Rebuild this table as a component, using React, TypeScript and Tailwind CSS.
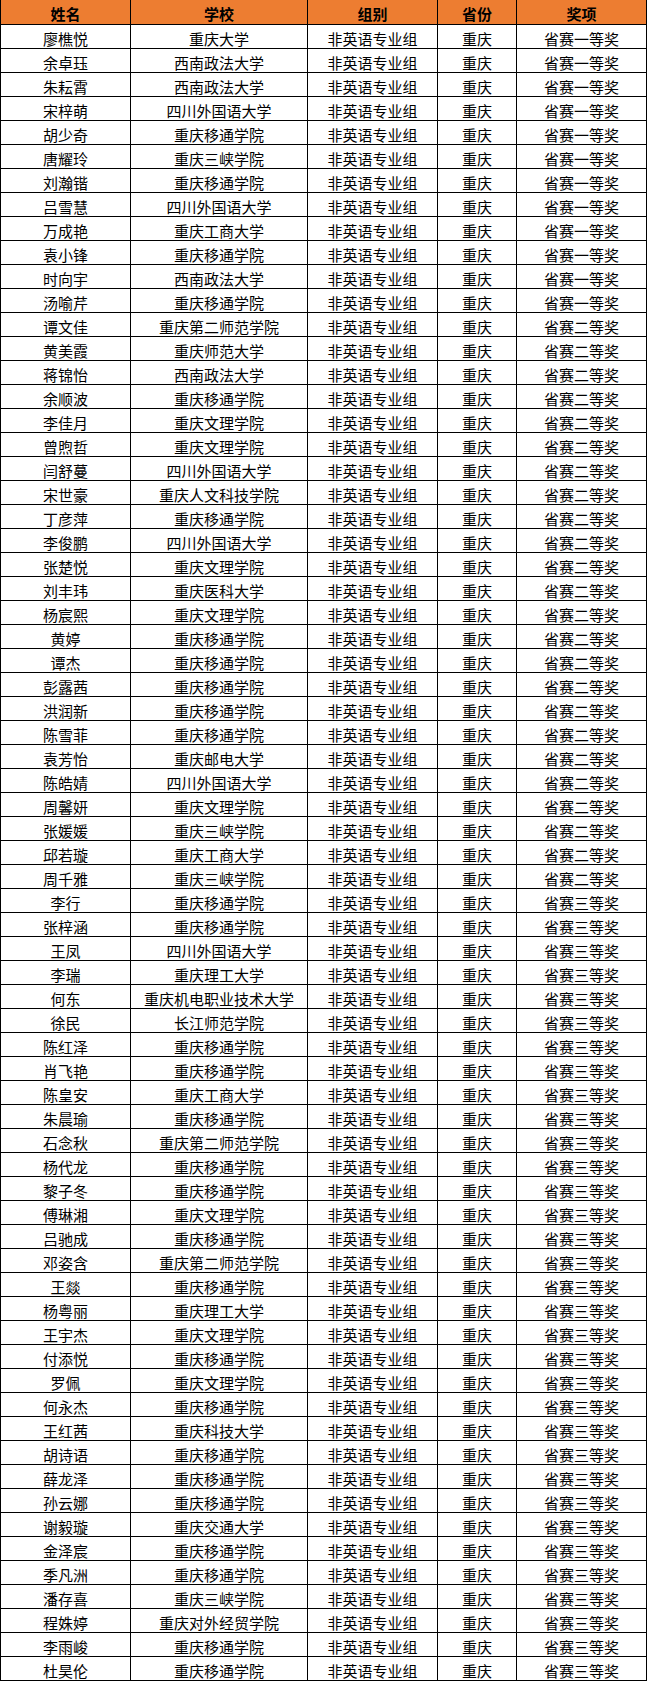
const HEADERS = ['姓名', '学校', '组别', '省份', '奖项'];

// [name, school, award level]
const ROWS: Array<[string, string, number]> = [
  ['廖樵悦', '重庆大学', 1],
  ['余卓珏', '西南政法大学', 1],
  ['朱耘霄', '西南政法大学', 1],
  ['宋梓萌', '四川外国语大学', 1],
  ['胡少奇', '重庆移通学院', 1],
  ['唐耀玲', '重庆三峡学院', 1],
  ['刘瀚锴', '重庆移通学院', 1],
  ['吕雪慧', '四川外国语大学', 1],
  ['万成艳', '重庆工商大学', 1],
  ['袁小锋', '重庆移通学院', 1],
  ['时向宇', '西南政法大学', 1],
  ['汤喻芹', '重庆移通学院', 1],
  ['谭文佳', '重庆第二师范学院', 2],
  ['黄美霞', '重庆师范大学', 2],
  ['蒋锦怡', '西南政法大学', 2],
  ['余顺波', '重庆移通学院', 2],
  ['李佳月', '重庆文理学院', 2],
  ['曾煦哲', '重庆文理学院', 2],
  ['闫舒蔓', '四川外国语大学', 2],
  ['宋世豪', '重庆人文科技学院', 2],
  ['丁彦萍', '重庆移通学院', 2],
  ['李俊鹏', '四川外国语大学', 2],
  ['张楚悦', '重庆文理学院', 2],
  ['刘丰玮', '重庆医科大学', 2],
  ['杨宸熙', '重庆文理学院', 2],
  ['黄婷', '重庆移通学院', 2],
  ['谭杰', '重庆移通学院', 2],
  ['彭露茜', '重庆移通学院', 2],
  ['洪润新', '重庆移通学院', 2],
  ['陈雪菲', '重庆移通学院', 2],
  ['袁芳怡', '重庆邮电大学', 2],
  ['陈皓婧', '四川外国语大学', 2],
  ['周馨妍', '重庆文理学院', 2],
  ['张媛媛', '重庆三峡学院', 2],
  ['邱若璇', '重庆工商大学', 2],
  ['周千雅', '重庆三峡学院', 2],
  ['李行', '重庆移通学院', 3],
  ['张梓涵', '重庆移通学院', 3],
  ['王凤', '四川外国语大学', 3],
  ['李瑞', '重庆理工大学', 3],
  ['何东', '重庆机电职业技术大学', 3],
  ['徐民', '长江师范学院', 3],
  ['陈红泽', '重庆移通学院', 3],
  ['肖飞艳', '重庆移通学院', 3],
  ['陈皇安', '重庆工商大学', 3],
  ['朱晨瑜', '重庆移通学院', 3],
  ['石念秋', '重庆第二师范学院', 3],
  ['杨代龙', '重庆移通学院', 3],
  ['黎子冬', '重庆移通学院', 3],
  ['傅琳湘', '重庆文理学院', 3],
  ['吕驰成', '重庆移通学院', 3],
  ['邓姿含', '重庆第二师范学院', 3],
  ['王燚', '重庆移通学院', 3],
  ['杨粤丽', '重庆理工大学', 3],
  ['王宇杰', '重庆文理学院', 3],
  ['付添悦', '重庆移通学院', 3],
  ['罗佩', '重庆文理学院', 3],
  ['何永杰', '重庆移通学院', 3],
  ['王红茜', '重庆科技大学', 3],
  ['胡诗语', '重庆移通学院', 3],
  ['薛龙泽', '重庆移通学院', 3],
  ['孙云娜', '重庆移通学院', 3],
  ['谢毅璇', '重庆交通大学', 3],
  ['金泽宸', '重庆移通学院', 3],
  ['季凡洲', '重庆移通学院', 3],
  ['潘存喜', '重庆三峡学院', 3],
  ['程姝婷', '重庆对外经贸学院', 3],
  ['李雨峻', '重庆移通学院', 3],
  ['杜昊伦', '重庆移通学院', 3],
];

const AWARDS: Record<number, string> = {
  1: '省赛一等奖',
  2: '省赛二等奖',
  3: '省赛三等奖',
};

function Cell({ children }: { children: React.ReactNode }) {
  return (
    <div className="flex h-[23px] items-center justify-center bg-white pt-[3px] leading-none">
      {children}
    </div>
  );
}

export default function App() {
  return (
    <div
      className="w-[647px] bg-white text-[15px] text-black"
      style={{ fontFamily: '"Noto Sans CJK SC", "Noto Sans", sans-serif' }}
    >
      <div className="grid grid-cols-[129px_176px_129px_78px_129px] gap-px bg-black px-px pb-px">
        {HEADERS.map((h) => (
          <div
            key={h}
            className="flex h-[24px] items-center justify-center bg-[#ED7D31] pt-[2px] font-bold leading-none"
          >
            {h}
          </div>
        ))}
        {ROWS.map(([name, school, level]) => (
          <div key={name} className="contents">
            <Cell>{name}</Cell>
            <Cell>{school}</Cell>
            <Cell>非英语专业组</Cell>
            <Cell>重庆</Cell>
            <Cell>{AWARDS[level]}</Cell>
          </div>
        ))}
      </div>
    </div>
  );
}
